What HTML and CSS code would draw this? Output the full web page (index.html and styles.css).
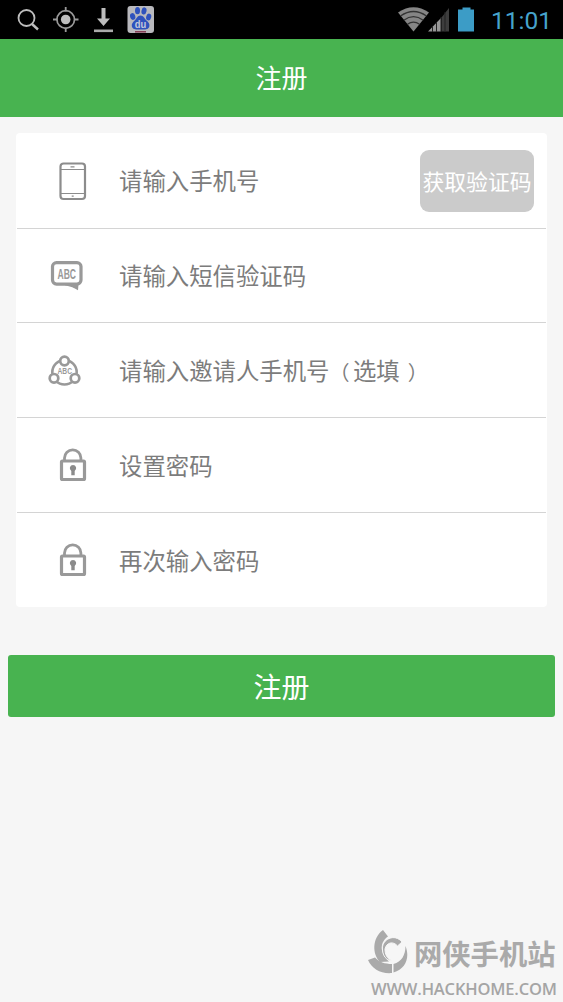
FILE: index.html
```html
<!DOCTYPE html>
<html lang="zh-CN">
<head>
<meta charset="utf-8">
<title>注册</title>
<link rel="stylesheet" href="styles.css">
</head>
<body>
<div class="status">
  <svg class="status-left" width="160" height="39" viewBox="0 0 160 39">
    <g fill="none" stroke="#bdbdbd">
      <circle cx="26.500" cy="18" r="8" stroke-width="1.800"/>
      <path d="M32 24l6 5.500" stroke-width="2.400"/>
      <circle cx="65.700" cy="19.500" r="8.800" stroke="#999" stroke-width="1.700"/>
      <path d="M65.700 7v4.500M65.700 27.500V32M53 19.500h4.500M74 19.500h4.500" stroke="#999" stroke-width="1.800"/>
    </g>
    <circle cx="65.700" cy="19.500" r="4.800" fill="#bdbdbd"/>
    <path d="M101.500 8h4v10.500h4.500l-6.500 7.500-6.500-7.500h4.500z" fill="#bdbdbd"/>
    <path d="M94 29.500h19v2.600H94z" fill="#aaa"/>
    <rect x="127.500" y="6" width="26.500" height="27" rx="3" fill="#b9b9bd"/>
    <g fill="#2f52bd">
      <ellipse cx="132.700" cy="16.500" rx="2.600" ry="3.400" transform="rotate(-15 132.700 16.500)"/>
      <ellipse cx="137.500" cy="10.700" rx="2.500" ry="3.600"/>
      <ellipse cx="144" cy="10.900" rx="2.500" ry="3.600" transform="rotate(12 144 10.900)"/>
      <ellipse cx="148.700" cy="17" rx="2.500" ry="3.400" transform="rotate(15 148.700 17)"/>
      <path d="M140.500 15.500c3 0 4 3 6 5 2 1.800 3.500 3.500 2.800 6-1 3.500-4.800 3-8.600 3s-7.800.5-8.800-3c-.7-2.500 1-4.200 2.800-5.900 2-2 2.800-5.100 5.800-5.100z"/>
    </g>
    <path d="M135 31.800h11" stroke="#80304a" stroke-width="1.400"/>
    <text class="du" x="134.800" y="27.600" textLength="11.500" lengthAdjust="spacingAndGlyphs">du</text>
  </svg>
  <div class="status-right">
    <svg width="78" height="39" viewBox="0 0 78 39">
      <path d="M0 12.500Q15.500 2 31 12.500L15.500 31.500z" fill="#858585"/>
      <path d="M2.500 16q13-9 26 0M5.800 20.200q9.700-7 19.400 0M9.500 24.300q6-4.500 12 0" fill="none" stroke="#333" stroke-width="1.300"/>
      <path d="M30 31.500L43 18v13.500z" fill="#969696"/>
      <path d="M43.500 17.500L51 8v23.500h-7.500z" fill="#3d3d3d"/>
      <path d="M34.500 26v6M38.500 22v10M43 17v15M47 12v20" stroke="#222" stroke-width="1"/>
      <path d="M60 9.500h4.500v-2h8v2H76v22H60z" fill="#3c9cc6"/>
    </svg>
    <span class="clock">11:01</span>
  </div>
</div>
<header class="title">注册</header>
<main class="page">
  <form class="card">
    <div class="row">
      <svg class="icon" width="46" height="46" viewBox="0 0 46 46" fill="none" stroke="#8c8c8c">
        <rect x="14.500" y="4.500" width="24.500" height="35.500" rx="3" stroke-width="2.200"/>
        <path d="M15 10.500h23M15 34.500h23" stroke-width="1"/>
        <path d="M24.500 7.800h4M25.700 37.200h2" stroke-width="1.300"/>
      </svg>
      <span class="hint">请输入手机号</span>
      <button class="code" type="button">获取验证码</button>
    </div>
    <div class="row">
      <svg class="icon" width="46" height="46" viewBox="0 0 46 46">
        <rect x="6.500" y="8.600" width="28.500" height="21.500" rx="4" fill="none" stroke="#999" stroke-width="3.200"/>
        <path d="M19 30.300h13.500l-.5 6Q27 32.800 19 31.300z" fill="#999"/>
        <text class="abc" x="11.500" y="24.600" textLength="18.500" lengthAdjust="spacingAndGlyphs">ABC</text>
      </svg>
      <span class="hint">请输入短信验证码</span>
    </div>
    <div class="row">
      <svg class="icon" width="46" height="46" viewBox="0 0 46 46">
        <circle cx="18.500" cy="24.300" r="12.200" fill="none" stroke="#999" stroke-width="2.600"/>
        <g fill="#fff" stroke="#999" stroke-width="2.700">
          <circle cx="18.500" cy="13" r="4.300"/>
          <circle cx="8" cy="30.300" r="4.300"/>
          <circle cx="29" cy="30.300" r="4.300"/>
        </g>
        <text class="abc-small" x="11.500" y="25.500" textLength="14.500" lengthAdjust="spacingAndGlyphs">ABC</text>
      </svg>
      <span class="hint">请输入邀请人手机号<span class="paren open">（</span>选填<span class="paren close">）</span></span>
    </div>
    <div class="row">
      <svg class="icon" width="46" height="46" viewBox="0 0 46 46">
        <path d="M18.500 17.500V15a8.200 8.200 0 0 1 16.400 0v2.500" fill="none" stroke="#999" stroke-width="2.800"/>
        <rect x="15.500" y="18" width="23" height="18.500" rx="1" fill="none" stroke="#999" stroke-width="3.200"/>
        <path d="M27 22a3.200 3.200 0 0 1 1.700 5.900v4.300h-3.400v-4.300A3.200 3.200 0 0 1 27 22z" fill="#8b8b8b"/>
      </svg>
      <span class="hint">设置密码</span>
    </div>
    <div class="row">
      <svg class="icon" width="46" height="46" viewBox="0 0 46 46">
        <path d="M18.500 17.500V15a8.200 8.200 0 0 1 16.400 0v2.500" fill="none" stroke="#999" stroke-width="2.800"/>
        <rect x="15.500" y="18" width="23" height="18.500" rx="1" fill="none" stroke="#999" stroke-width="3.200"/>
        <path d="M27 22a3.200 3.200 0 0 1 1.700 5.900v4.300h-3.400v-4.300A3.200 3.200 0 0 1 27 22z" fill="#8b8b8b"/>
      </svg>
      <span class="hint">再次输入密码</span>
    </div>
  </form>
  <button class="submit" type="button">注册</button>
</main>
<footer class="mark">
  <div class="mark-top">
    <svg width="42" height="44" viewBox="0 0 42 44" fill="#aaa">
      <path d="M16 0l5 6.500C13 12 12 22 22 31.500l-9 .5C5 24 5 8 16 0z"/>
      <path d="M1 30l7-2.500C12 32 18 34 25 34v9C14 44 5 39 1 30z"/>
      <path d="M26.500 42.500V34c8-2 12-9 12-18C43 27 39 39 26.500 42.500z"/>
      <path d="M15.500 20C14 9 28 3 35 12l-4.500 4c-4-5-11-4-12.500 3 0 6 2 9 7 12-6-1-9-5-9.500-11z" stroke="#f6f6f6" stroke-width="1"/>
    </svg>
    <span class="mark-name">网侠手机站</span>
  </div>
  <svg class="mark-url" width="196" height="24" viewBox="0 0 196 24">
    <text x="4" y="17" textLength="186" lengthAdjust="spacing">WWW.HACKHOME.COM</text>
  </svg>
</footer>
</body>
</html>
```
FILE: styles.css
```css
* { box-sizing: border-box; }
body {
  margin: 0;
  height: 1002px;
  display: flex;
  flex-direction: column;
  overflow: hidden;
  background: #f6f6f6;
  font-family: "Noto Sans CJK SC", sans-serif;
}
button {
  border: 0;
  padding: 0;
  font-family: inherit;
  color: #fff;
}
.status {
  height: 39px;
  flex: none;
  display: flex;
  justify-content: space-between;
  background: #000;
}
.status-right {
  display: flex;
  width: 165px;
}
.status-right svg { flex: none; }
.clock {
  margin-left: 15px;
  font: 24.500px/41px Roboto, sans-serif;
  color: #46a3cc;
  white-space: nowrap;
}
.du {
  font: bold 10px "Liberation Sans", sans-serif;
  fill: #c5c9da;
}
.title {
  height: 78px;
  flex: none;
  background: #48b350;
  color: #fff;
  font-size: 26px;
  line-height: 76px;
  text-align: center;
}
.page {
  padding: 16px 8px 0;
}
.card {
  margin: 0 8px;
  height: 474px;
  display: grid;
  grid-template-rows: 96px 94px 95px 95px 94px;
  background: #fff;
  border-radius: 4px;
}
.row {
  display: flex;
  align-items: center;
  margin: 0 1px;
  padding: 1px 12px 0 29px;
  border-bottom: 1px solid #d4d4d4;
}
.row:last-child { border-bottom: 0; }
.icon {
  flex: none;
  margin-top: 1px;
}
.hint {
  flex: 1;
  margin-left: 27px;
  padding-bottom: 2px;
  font-size: 23.400px;
  line-height: 34px;
  color: #7c7c7c;
  white-space: nowrap;
}
.paren {
  display: inline-block;
  width: 23.400px;
  font-size: 20px;
  line-height: 1;
}
.close { text-indent: 8px; }
.code {
  width: 114px;
  height: 62px;
  padding-bottom: 2px;
  border-radius: 9px;
  background: #cbcbcb;
  font-size: 21.800px;
  white-space: nowrap;
}
.abc {
  font: bold 14px "Liberation Sans", sans-serif;
  fill: #999;
}
.abc-small {
  font: bold 8.500px "Liberation Sans", sans-serif;
  fill: #999;
}
.submit {
  display: block;
  width: 547px;
  height: 62px;
  margin-top: 48px;
  border-radius: 3px;
  background: #48b350;
  font-size: 28px;
}
.mark {
  width: 196px;
  margin: auto 0 0 auto;
}
.mark-top {
  display: flex;
  height: 48px;
}
.mark-name {
  margin-left: 5px;
  font-size: 28.300px;
  line-height: 46px;
  font-weight: 700;
  color: #aaa;
  white-space: nowrap;
}
.mark-url {
  display: block;
  font: 600 16.500px "Open Sans", sans-serif;
  fill: #a5a5a5;
}
```
